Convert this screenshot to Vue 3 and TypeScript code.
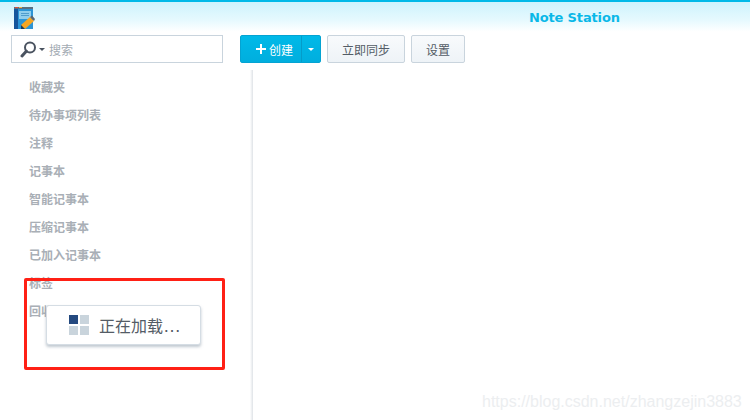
<script setup lang="ts">
const items: string[] = ['收藏夹', '待办事项列表', '注释', '记事本', '智能记事本', '压缩记事本', '已加入记事本', '标签', '回收站']
</script>

<template>
  <div class="app">
    <header class="title">
      <svg class="logo" width="22" height="24" viewBox="0 0 22 24">
        <rect x="1" y="1" width="19" height="22" fill="#2b95d6" />
        <rect x="1" y="1" width="4" height="22" fill="#15559c" />
        <rect x="1" y="1" width="19" height="2" fill="#5b6f80" />
        <rect x="2" y="1" width="3" height="1" fill="#e04a3a" />
        <rect x="6" y="1" width="3" height="1" fill="#f0b040" />
        <rect x="6" y="5" width="12" height="8" fill="#8fcdec" />
        <rect x="8" y="7" width="8" height="1" fill="#4f9ccc" />
        <rect x="8" y="9" width="8" height="1" fill="#4f9ccc" />
        <path d="M8 19 L17 11 L21 15 L12 23 L8 23 Z" fill="#f6a623" />
        <path d="M17 11 L19 9.5 L22 13 L21 15 Z" fill="#5a6672" />
        <path d="M8 19 L8 23 L12 23 Z" fill="#173a5e" />
      </svg>
      <span class="name">Note Station</span>
    </header>
    <div class="toolbar">
      <div class="search">
        <svg width="17" height="17" viewBox="0 0 17 17">
          <circle cx="10" cy="6.5" r="5" fill="none" stroke="#4a5360" stroke-width="2" />
          <path d="M6.3 10.2 L2 15" stroke="#4a5360" stroke-width="3" stroke-linecap="round" />
        </svg>
        <i class="caret dark"></i>
        <span>搜索</span>
      </div>
      <div class="create">
        <span class="main">
          <svg class="plus" width="10" height="10" viewBox="0 0 10 10">
            <path d="M5 0 V10 M0 5 H10" stroke="#fff" stroke-width="2" />
          </svg>
          创建
        </span>
        <span class="drop"><i class="caret white"></i></span>
      </div>
      <button class="btn sync">立即同步</button>
      <button class="btn set">设置</button>
    </div>
    <div class="body">
      <nav class="side">
        <div v-for="item in items" :key="item" class="item">{{ item }}</div>
      </nav>
      <main class="content"></main>
    </div>
    <div class="loading">
      <span class="grid"><i class="on"></i><i></i><i></i><i></i></span>
      <span>正在加载<span class="dots">…</span></span>
    </div>
    <div class="mark"></div>
    <div class="water">https://blog.csdn.net/zhangzejin3883</div>
  </div>
</template>

<style>
html, body { margin: 0; background: #fff; }
</style>

<style scoped>
.app {
  position: relative;
  width: 750px;
  height: 420px;
  overflow: hidden;
  background: #fff;
  font-family: "Liberation Sans", "Noto Sans CJK SC", sans-serif;
}
.title {
  box-sizing: border-box;
  height: 35px;
  border-top: 2px solid #00b9e8;
  background: linear-gradient(#cdf3fd, #e6f9fe 55%, #fff 90%);
  display: flex;
  padding-left: 13px;
  position: relative;
}
.logo { margin-top: 4px; }
.name {
  position: absolute;
  left: 529px;
  top: 8px;
  font: bold 13px/16px "DejaVu Sans", sans-serif;
  letter-spacing: -0.15px;
  color: #0ab8e8;
}
.toolbar {
  display: flex;
  height: 28px;
  padding-left: 11px;
}
.search {
  box-sizing: border-box;
  width: 212px;
  border: 1px solid #c9d4dd;
  display: flex;
  align-items: center;
  padding-left: 8px;
  font-size: 12px;
  color: #a3abb3;
}
.caret {
  display: inline-block;
  width: 0;
  height: 0;
  border-left: 3px solid transparent;
  border-right: 3px solid transparent;
  border-top: 3px solid #fff;
}
.caret.dark { border-top-color: #4a5360; margin: 0 4px 0 2px; }
.create {
  margin-left: 17px;
  width: 81px;
  display: flex;
  box-sizing: border-box;
  border: 1px solid #04a3d2;
  border-radius: 2px;
  background: linear-gradient(#00b9e8, #00aede);
  color: #fff;
  font-size: 12px;
}
.main {
  width: 61px;
  display: flex;
  align-items: center;
  justify-content: flex-end;
  border-right: 1px solid #049cc9;
  padding-right: 8px;
  box-sizing: border-box;
}
.plus { margin-right: 3px; }
.drop { flex: 1; display: flex; align-items: center; justify-content: center; }
.btn {
  box-sizing: border-box;
  border: 1px solid #c9d4dd;
  border-radius: 2px;
  background: linear-gradient(#f8fafc, #eef3f7);
  color: #535c66;
  font: 12px "Liberation Sans", "Noto Sans CJK SC", sans-serif;
  padding: 0;
}
.sync { width: 78px; margin-left: 6px; }
.set { width: 54px; margin-left: 6px; }
.body {
  display: flex;
  margin-top: 7px;
  height: 350px;
}
.side {
  width: 253px;
  box-sizing: border-box;
  padding: 4px 0 0 29px;
  background: linear-gradient(to right, #fff, #dfe3e7) right top / 3px 100% no-repeat;
}
.item {
  height: 28px;
  line-height: 28px;
  font-size: 12px;
  font-weight: bold;
  color: #a9afb6;
}
.content { flex: 1; }
.loading {
  position: absolute;
  left: 46px;
  top: 305px;
  box-sizing: border-box;
  width: 155px;
  height: 40px;
  border: 1px solid #d5dde4;
  border-radius: 3px;
  background: #fff;
  box-shadow: 0 2px 3px rgba(140, 155, 170, 0.55);
  display: flex;
  align-items: center;
  padding-left: 22px;
  gap: 10px;
  font-size: 16px;
  color: #545c66;
}
.dots { font-size: 18px; line-height: 16px; }
.grid {
  display: grid;
  grid-template-columns: 9px 9px;
  grid-template-rows: 9px 9px;
  gap: 2px;
}
.grid i { background: #c9d4dc; }
.grid i.on { background: #24497f; }
.mark {
  position: absolute;
  left: 24px;
  top: 278px;
  width: 195px;
  height: 86px;
  border: 3px solid #ff2015;
  border-radius: 2px;
}
.water {
  position: absolute;
  left: 482px;
  top: 392px;
  font-size: 16px;
  line-height: 20px;
  color: #eceef0;
  white-space: nowrap;
}
</style>
